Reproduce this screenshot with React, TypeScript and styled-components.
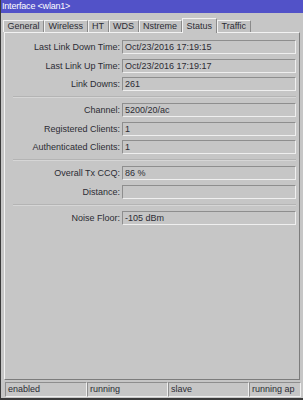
import styled, { createGlobalStyle } from 'styled-components';

const GlobalStyle = createGlobalStyle`
  body {
    margin: 0;
    background: #c6c6c6;
    font-family: "Liberation Sans", Arial, sans-serif;
  }
`;

const Window = styled.div`
  width: 303px;
  height: 400px;
  box-sizing: border-box;
  display: flex;
  flex-direction: column;
  background: #c6c6c6;
  border-left: 1px solid #3a3a3a;
  border-bottom: 2px solid #3a3a3a;
  color: #2c2c34;
  font-size: 9px;
`;

const TitleBar = styled.div`
  height: 13px;
  line-height: 13px;
  padding-left: 1px;
  background: #5252c8;
  color: #ffffff;
  font-size: 9px;
  letter-spacing: -0.2px;
`;

const TabStrip = styled.div`
  height: 19px;
  display: flex;
  align-items: flex-end;
  padding-left: 2px;
`;

const Tab = styled.div<{ $active?: boolean }>`
  box-sizing: border-box;
  height: ${(p) => (p.$active ? '15px' : '12px')};
  padding: ${(p) => (p.$active ? '2px 4px 0' : '0 3.5px')};
  line-height: 11px;
  border: 1px solid #f2f2f2;
  border-right-color: #8a8a8a;
  border-bottom: none;
  background: ${(p) => (p.$active ? '#c6c6c6' : '#c2c2c2')};
  margin-bottom: ${(p) => (p.$active ? '-1px' : '0')};
  position: relative;
  z-index: ${(p) => (p.$active ? 1 : 0)};
`;

const Panel = styled.div`
  flex: 1;
  margin: 0 3px 0 3px;
  border-top: 1px solid #f2f2f2;
  border-left: 1px solid #f2f2f2;
  border-right: 1px solid #7c7c7c;
  border-bottom: 1px solid #7c7c7c;
  padding: 7px 3px 0 0;
  display: flex;
  flex-direction: column;
`;

const Group = styled.div`
  display: flex;
  flex-direction: column;
  gap: 4.5px;
`;

const Row = styled.div`
  display: grid;
  grid-template-columns: 117px 1fr;
  align-items: center;
`;

const Label = styled.div`
  text-align: right;
  padding-right: 2px;
  white-space: nowrap;
`;

const Field = styled.div`
  box-sizing: border-box;
  height: 14px;
  line-height: 12px;
  padding-left: 2px;
  border: 1px solid #8e8e8e;
  border-right-color: #efefef;
  border-bottom-color: #efefef;
  white-space: nowrap;
`;

const Separator = styled.div`
  height: 0;
  margin: 5px 0 5px 8px;
  border-top: 1px solid #b4b4b4;
  border-bottom: 1px solid #d6d6d6;
`;

const StatusBar = styled.div`
  height: 15px;
  margin: 2px 2px 1px 4px;
  display: grid;
  grid-template-columns: 82px 81px 81px 1fr;
`;

const StatusCell = styled.div`
  box-sizing: border-box;
  line-height: 13px;
  padding-left: 2px;
  border: 1px solid #8e8e8e;
  border-right-color: #efefef;
  border-bottom-color: #efefef;
  white-space: nowrap;
`;

const tabs = ['General', 'Wireless', 'HT', 'WDS', 'Nstreme', 'Status', 'Traffic'];

const groups: [string, string][][] = [
  [
    ['Last Link Down Time:', 'Oct/23/2016 17:19:15'],
    ['Last Link Up Time:', 'Oct/23/2016 17:19:17'],
    ['Link Downs:', '261'],
  ],
  [
    ['Channel:', '5200/20/ac'],
    ['Registered Clients:', '1'],
    ['Authenticated Clients:', '1'],
  ],
  [
    ['Overall Tx CCQ:', '86 %'],
    ['Distance:', ''],
  ],
  [['Noise Floor:', '-105 dBm']],
];

export default function App() {
  return (
    <>
      <GlobalStyle />
      <Window>
        <TitleBar>Interface &lt;wlan1&gt;</TitleBar>
        <TabStrip>
          {tabs.map((t) => (
            <Tab key={t} $active={t === 'Status'}>{t}</Tab>
          ))}
        </TabStrip>
        <Panel>
          {groups.map((g, i) => (
            <div key={i}>
              {i > 0 && <Separator />}
              <Group>
                {g.map(([label, value]) => (
                  <Row key={label}>
                    <Label>{label}</Label>
                    <Field>{value}</Field>
                  </Row>
                ))}
              </Group>
            </div>
          ))}
        </Panel>
        <StatusBar>
          <StatusCell>enabled</StatusCell>
          <StatusCell>running</StatusCell>
          <StatusCell>slave</StatusCell>
          <StatusCell>running ap</StatusCell>
        </StatusBar>
      </Window>
    </>
  );
}
